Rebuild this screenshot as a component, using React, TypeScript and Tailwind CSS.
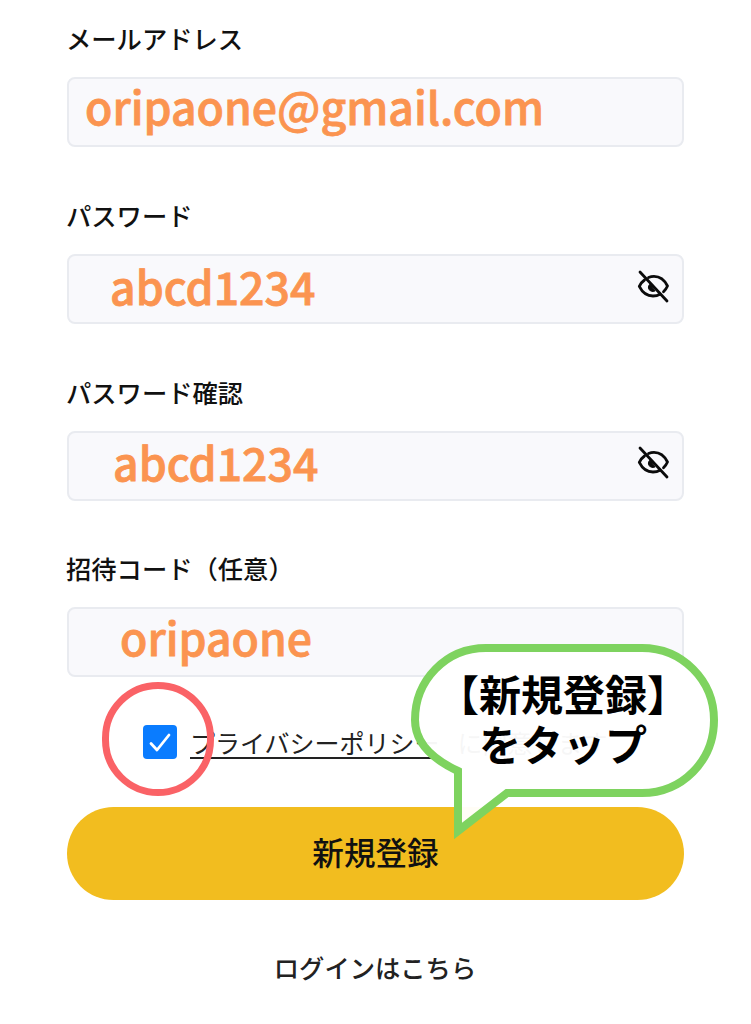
const jp = '"Noto Sans CJK JP", "Noto Sans", sans-serif'

function EyeSlash() {
  return (
    <svg className="w-[33px] h-[33px]" viewBox="0 0 33 33" fill="none" stroke="#0b0b0b" strokeWidth="2.800" strokeLinecap="round" strokeLinejoin="round">
      <path d="M3 2l27 29" />
      <path d="M11.500 7.500C13.500 6.700 15 6.400 17 6.400c6.500 0 11 4.600 13.500 9.600-1 2.300-2.400 4.300-4 5.800" />
      <path d="M7.500 10C5 11.800 3.300 14 2.300 16.400c2.500 5 7 9.600 13.700 9.600 2.600 0 5-.6 7-1.800" />
      <path d="M13 14.500c-1 .8-1.500 1.700-1.500 2.800 0 2.300 2 4 4.300 4 .7 0 1.300-.1 1.900-.4z" fill="#0b0b0b" strokeWidth="1.200" />
    </svg>
  )
}

function Field({ label, value, pad, eye }: { label: string; value: string; pad: string; eye?: boolean }) {
  return (
    <div className="flex flex-col">
      <label className="h-[35px] leading-[35px] text-[25.3px] font-medium text-[#111111] -ml-[1px]">{label}</label>
      <div className={`mt-[21px] h-[70px] rounded-[8px] border-2 border-[#e9ebf0] bg-[#f9f9fc] flex items-center justify-between pr-[12px] ${pad}`}>
        <span className="font-medium text-[#fb9450] leading-none text-[44.6px] [-webkit-text-stroke:0.8px_#fb9450]">{value}</span>
        {eye && <EyeSlash />}
      </div>
    </div>
  )
}

export default function App() {
  return (
    <div className="relative w-[751px] h-[1024px] bg-white overflow-hidden" style={{ fontFamily: jp }}>
      <div className="flex flex-col px-[67px] pt-[21px] gap-[51px]">
        <Field label="メールアドレス" value="oripaone@gmail.com" pad="pl-[16px] pb-[12px]" />
        <Field label="パスワード" value="abcd1234" pad="pl-[41px] pb-[6px]" eye />
        <Field label="パスワード確認" value="abcd1234" pad="pl-[44px] pb-[7px]" eye />
        <div className="-mt-[1px]">
          <Field label="招待コード（任意）" value="oripaone" pad="pl-[51px] pb-[9px]" />
        </div>
      </div>

      <div className="flex items-center pl-[143px] mt-[48px] h-[34px]">
        <div className="w-[34px] h-[34px] rounded-[4px] bg-[#0a7cff] flex items-center justify-center">
          <svg className="w-[24px] h-[24px]" viewBox="0 0 24 24" fill="none" stroke="white" strokeWidth="2.800" strokeLinecap="round" strokeLinejoin="round">
            <path d="M3 13.500l6 6.500L21 5" />
          </svg>
        </div>
        <span className="ml-[13px] text-[25px] leading-[34px] text-[#222222] underline underline-offset-[4px]">プライバシーポリシー</span>
        <span className="ml-[18px] text-[25px] leading-[34px] text-[#222222]">に同意します</span>
      </div>

      <div className="mx-[67px] mt-[48px] h-[93px] rounded-full bg-[#f2bd1f] flex items-center justify-center pb-[4px]">
        <span className="text-[31.600px] font-medium text-[#111111]">新規登録</span>
      </div>

      <div className="mt-[47px] -ml-[1px] text-center text-[25.300px] leading-[40px] font-medium text-[#222222]">ログインはこちら</div>

      {/* red circle annotation */}
      <div className="absolute left-[102px] top-[682px] w-[112px] h-[114px] rounded-full border-[7px] border-[#fa6266]" />

      {/* speech bubble annotation */}
      <svg className="absolute left-0 top-0 w-[751px] h-[1024px] pointer-events-none" viewBox="0 0 751 1024" fill="none">
        <path
          d="M486 648H642C682 648 714 680 714 720C714 761 682 793 642 793H507L458 831V771C430 758 415 742 415 720C415 680 446 648 486 648Z"
          fill="white"
          fillOpacity="0.96"
          stroke="#7ed35f"
          strokeWidth="8"
          strokeLinejoin="miter"
        />
      </svg>
      <div className="absolute left-[413px] top-[668px] w-[300px] text-center text-[42px] leading-[50px] font-bold text-black">
        <div className="whitespace-nowrap">【新規登録】</div>
        <div className="whitespace-nowrap">をタップ</div>
      </div>
    </div>
  )
}
